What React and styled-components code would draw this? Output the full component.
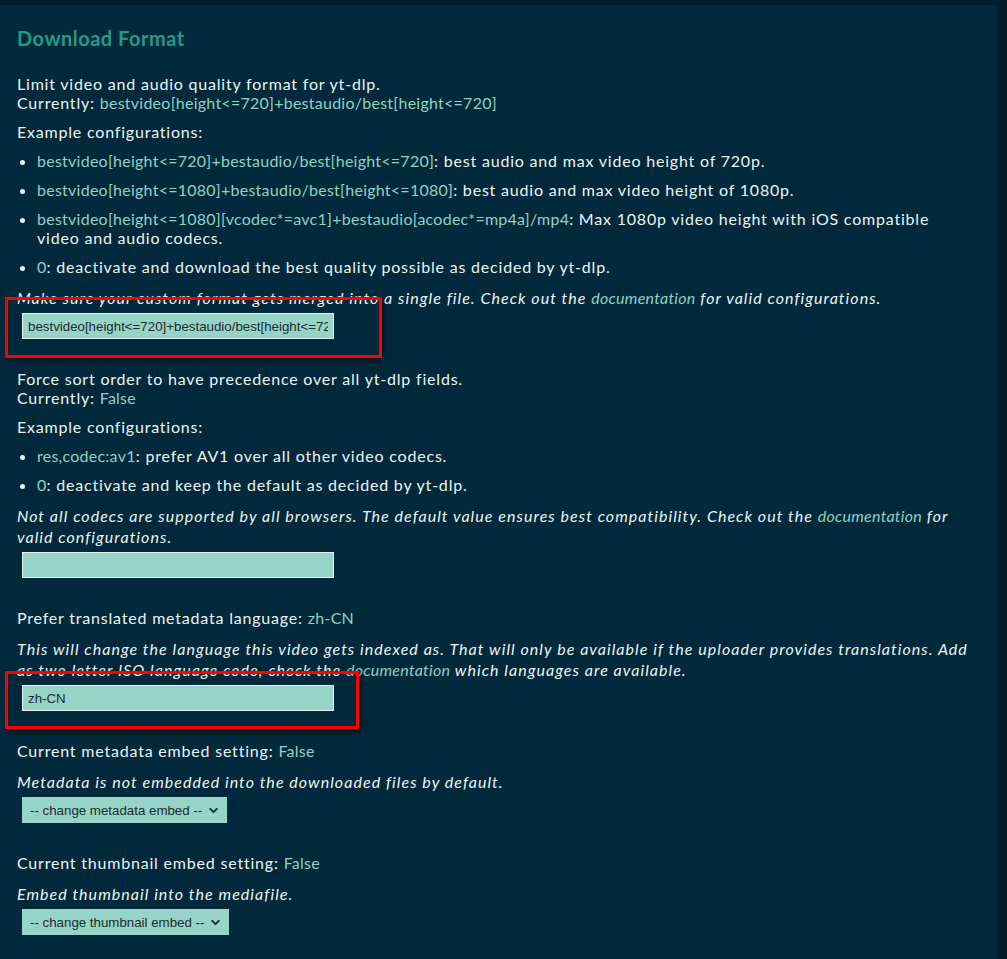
import React from "react";
import styled, { createGlobalStyle } from "styled-components";
import { ChevronDown } from "lucide-react";

const GlobalStyle = createGlobalStyle`
  html, body {
    margin: 0;
    padding: 0;
    background: #011c2a;
  }
  body {
    font-family: Lato, "Noto Sans", sans-serif;
    color: #eef3f2;
  }
`;

const Page = styled.div`
  padding-top: 5px;
  padding-right: 10px;
  min-height: 954px;
`;

const Panel = styled.div`
  background: #00293b;
  padding: 21px 24px 20px 17px;
  min-height: 913px;
`;

const Heading = styled.h2`
  margin: 0 0 24px;
  font-size: 20px;
  line-height: 24px;
  font-weight: 700;
  color: #239b89;
  letter-spacing: 0.5px;
`;

const Section = styled.div`
  margin-bottom: 30px;
`;

const Text = styled.p`
  margin: 0 0 10px;
  font-size: 16px;
  line-height: 19px;
  letter-spacing: 0.8px;
`;

const Value = styled.span`
  color: #8fd2c3;
  letter-spacing: 0.25px;
`;

const List = styled.ul`
  margin: 0;
  padding: 0 0 0 20px;
`;

const Item = styled.li`
  margin: 0 0 10px;
  font-size: 16px;
  line-height: 19px;
  letter-spacing: 0.8px;
`;

const Help = styled.p`
  margin: 0 0 5px;
  padding-top: 1px;
  font-size: 16px;
  line-height: 21px;
  font-style: italic;
  letter-spacing: 1.04px;
`;

const Field = styled.div`
  position: relative;
  margin-left: 5px;
  width: ${(p) => p.$w}px;
`;

const Input = styled.input`
  box-sizing: border-box;
  display: block;
  width: 312px;
  height: 26px;
  margin: 0;
  padding: 0 5px;
  border: 1px solid #e6f2ef;
  background: #96d4c7;
  color: #1d2b30;
  font-family: "Liberation Sans", Arial, sans-serif;
  font-size: 13.3px;
  outline: none;
`;

const Select = styled.select`
  box-sizing: border-box;
  display: block;
  appearance: none;
  width: ${(p) => p.$w}px;
  height: 26px;
  margin: 0;
  padding: 0 0 0 8px;
  border: none;
  background: #96d4c7;
  color: #1d2b30;
  font-family: "Liberation Sans", Arial, sans-serif;
  font-size: 13.3px;
  outline: none;
`;

const Chevron = styled(ChevronDown)`
  position: absolute;
  right: 7px;
  top: 7px;
  color: #1d2b30;
  pointer-events: none;
`;

const Mark = styled.div`
  position: absolute;
  left: -17px;
  top: ${(p) => p.$top}px;
  right: ${(p) => p.$right}px;
  bottom: ${(p) => p.$bottom}px;
  border: 3px solid #ff0000;
  box-shadow: 2px 3px 6px rgba(0, 0, 0, 0.45);
  pointer-events: none;
`;

function Dropdown({ label, width }) {
  return (
    <Field $w={width}>
      <Select $w={width} defaultValue="">
        <option value="">{label}</option>
        <option value="true">True</option>
        <option value="false">False</option>
      </Select>
      <Chevron size={13} strokeWidth={3.5} />
    </Field>
  );
}

export default function App() {
  return (
    <Page>
      <GlobalStyle />
      <Panel>
        <Heading>Download Format</Heading>

        <Section>
          <Text>
            Limit video and audio quality format for yt-dlp.
            <br />
            Currently: <Value>bestvideo[height&lt;=720]+bestaudio/best[height&lt;=720]</Value>
          </Text>
          <Text>Example configurations:</Text>
          <List>
            <Item>
              <Value>bestvideo[height&lt;=720]+bestaudio/best[height&lt;=720]</Value>: best audio and max video height of 720p.
            </Item>
            <Item>
              <Value>bestvideo[height&lt;=1080]+bestaudio/best[height&lt;=1080]</Value>: best audio and max video height of 1080p.
            </Item>
            <Item>
              <Value>bestvideo[height&lt;=1080][vcodec*=avc1]+bestaudio[acodec*=mp4a]/mp4</Value>: Max 1080p video height with iOS compatible video and audio codecs.
            </Item>
            <Item>
              <Value>0</Value>: deactivate and download the best quality possible as decided by yt-dlp.
            </Item>
          </List>
          <Help>
            Make sure your custom format gets merged into a single file. Check out the <Value>documentation</Value> for valid configurations.
          </Help>
          <Field $w={312}>
            <Input defaultValue="bestvideo[height<=720]+bestaudio/best[height<=720]" />
            <Mark $top={-16} $right={-48} $bottom={-19} />
          </Field>
        </Section>

        <Section>
          <Text>
            Force sort order to have precedence over all yt-dlp fields.
            <br />
            Currently: <Value>False</Value>
          </Text>
          <Text>Example configurations:</Text>
          <List>
            <Item>
              <Value>res,codec:av1</Value>: prefer AV1 over all other video codecs.
            </Item>
            <Item>
              <Value>0</Value>: deactivate and keep the default as decided by yt-dlp.
            </Item>
          </List>
          <Help>
            Not all codecs are supported by all browsers. The default value ensures best compatibility. Check out the <Value>documentation</Value> for valid configurations.
          </Help>
          <Field $w={312}>
            <Input defaultValue="" />
          </Field>
        </Section>

        <Section>
          <Text>
            Prefer translated metadata language: <Value>zh-CN</Value>
          </Text>
          <Help>
            This will change the language this video gets indexed as. That will only be available if the uploader provides translations. Add as two letter ISO language code, check the <Value>documentation</Value> which languages are available.
          </Help>
          <Field $w={312}>
            <Input defaultValue="zh-CN" />
            <Mark $top={-14} $right={-25} $bottom={-18} />
          </Field>
        </Section>

        <Section>
          <Text>
            Current metadata embed setting: <Value>False</Value>
          </Text>
          <Help>Metadata is not embedded into the downloaded files by default.</Help>
          <Dropdown label="-- change metadata embed --" width={205} />
        </Section>

        <Section>
          <Text>
            Current thumbnail embed setting: <Value>False</Value>
          </Text>
          <Help>Embed thumbnail into the mediafile.</Help>
          <Dropdown label="-- change thumbnail embed --" width={207} />
        </Section>
      </Panel>
    </Page>
  );
}
